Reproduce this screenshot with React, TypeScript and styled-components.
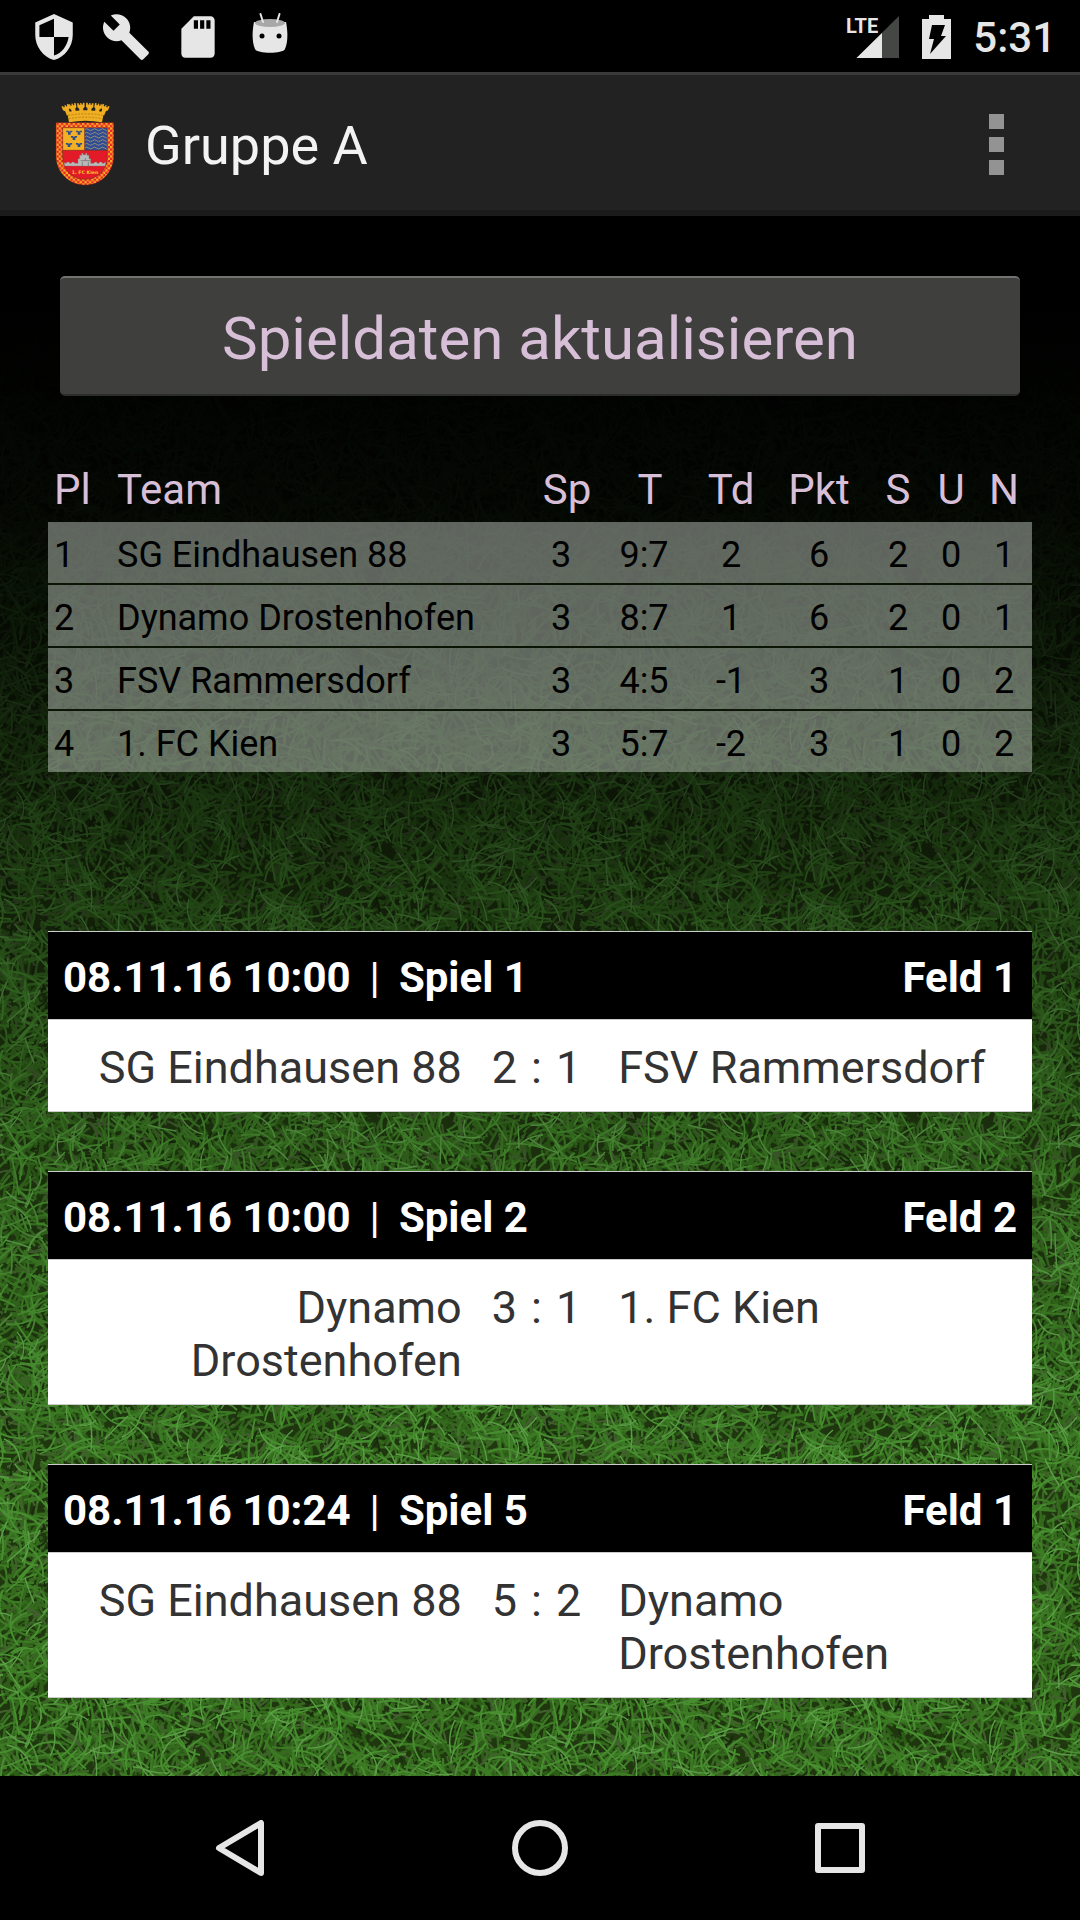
import React from 'react';
import styled, { createGlobalStyle } from 'styled-components';

const GlobalStyle = createGlobalStyle`
  *, *::before, *::after { box-sizing: border-box; }
  body {
    margin: 0;
    background: #000;
    font-family: Roboto, "Noto Sans", sans-serif;
  }
`;

const Screen = styled.div`
  display: flex;
  flex-direction: column;
  min-height: 100vh;
`;

/* ---------- status bar ---------- */

const StatusBar = styled.header`
  display: flex;
  justify-content: space-between;
  align-items: center;
  height: 72px;
  padding: 2px 24px 0 29px;
  background: #000;
`;

const StatusGroup = styled.div<{ $gap: number }>`
  display: flex;
  align-items: center;
  gap: ${(p) => p.$gap}px;
`;

const Clock = styled.time`
  color: #e6e6e6;
  font-size: 42px;
  font-weight: 500;
  line-height: 50px;
  padding-top: 2px;
`;

/* ---------- app bar ---------- */

const AppBar = styled.div`
  display: flex;
  align-items: center;
  height: 144px;
  padding: 3px 64px 0 54px;
  background: #222;
  border-top: 3px solid #3a3a3a;
  border-bottom: 6px solid #1b1b1b;
`;

const Title = styled.h1`
  flex: 1;
  margin: 0 0 0 29px;
  color: #f3f3f3;
  font-size: 54px;
  font-weight: 400;
  line-height: 64px;
  padding-top: 4px;
`;

const MenuButton = styled.button`
  display: flex;
  flex-direction: column;
  gap: 8px;
  padding: 12px;
  margin: 0;
  border: 0;
  background: none;
`;

const MenuDot = styled.span`
  width: 15px;
  height: 15px;
  background: #939393;
`;

/* ---------- content ---------- */

const Content = styled.main`
  position: relative;
  isolation: isolate;
  flex: 1;
  padding: 60px 48px;
`;

const GrassLayer = styled.svg`
  position: absolute;
  inset: 0;
  width: 100%;
  height: 100%;
  z-index: -1;
`;

const RefreshRow = styled.div`
  display: flex;
  padding: 0 12px;
`;

const RefreshButton = styled.button`
  flex: 1;
  height: 120px;
  padding: 6px 16px 0;
  border: 0;
  border-top: 2px solid #737371;
  border-bottom: 2px solid #2c2c2b;
  border-radius: 5px;
  background: #3f3f3d;
  color: #d8bfd8;
  font: 400 60px/70px Roboto, "Noto Sans", sans-serif;
`;

const Standings = styled.table`
  width: 100%;
  margin-top: 66px;
  table-layout: fixed;
  border-collapse: separate;
  border-spacing: 0;
`;

const Col = styled.col<{ $width?: number }>`
  width: ${(p) => (p.$width ? `${p.$width}px` : 'auto')};
`;

const HeadCell = styled.th<{ $align?: string; $shift?: boolean }>`
  height: 60px;
  padding: 3px ${(p) => (p.$align ? 4 : 0)}px 0 ${(p) => (p.$align ? 6 : p.$shift ? 12 : 0)}px;
  color: #d8bfd8;
  font-size: 42px;
  font-weight: 400;
  line-height: 49px;
  text-align: ${(p) => p.$align ?? 'center'};
  vertical-align: top;
  white-space: nowrap;
`;

const BodyRow = styled.tr`
  &:not(:last-child) > td {
    border-bottom: 2px solid #0b1405;
  }
`;

const Cell = styled.td<{ $align?: string }>`
  padding: 12px ${(p) => (p.$align ? 6 : 0)}px 7px;
  background: rgba(186, 194, 186, 0.5);
  background-clip: padding-box;
  color: #000;
  font-size: 36px;
  line-height: 42px;
  text-align: ${(p) => p.$align ?? 'center'};
  white-space: nowrap;
`;

const MatchList = styled.section`
  display: flex;
  flex-direction: column;
  gap: 59px;
  margin-top: 159px;
`;

const MatchCard = styled.article`
  border-top: 1px solid #ccc;
  border-bottom: 1px solid #ccc;
  background: #fff;
`;

const MatchHead = styled.header`
  display: flex;
  justify-content: space-between;
  padding: 21px 15px 17px;
  background: #000;
  color: #fff;
  font-size: 42px;
  font-weight: 700;
  line-height: 49px;
`;

const MatchInfo = styled.div`
  display: flex;
  gap: 19px;
`;

const Divider = styled.span`
  font-weight: 400;
`;

const MatchBody = styled.div`
  display: grid;
  grid-template-columns: 1fr auto 1fr;
  padding: 21px 16px 17px;
  border-top: 1px solid #ccc;
  color: #333;
  font-size: 45px;
  line-height: 53px;
`;

const TeamName = styled.span<{ $home?: boolean }>`
  text-align: ${(p) => (p.$home ? 'right' : 'left')};
`;

const Score = styled.span`
  display: flex;
  gap: 14px;
  padding: 0 37px 0 30px;
`;

/* ---------- navigation bar ---------- */

const NavBar = styled.nav`
  display: flex;
  height: 144px;
  padding: 0 90px;
  background: #000;
`;

const NavButton = styled.button`
  flex: 1;
  display: flex;
  align-items: center;
  justify-content: center;
  padding: 0;
  border: 0;
  background: none;
`;

/* ---------- drawings ---------- */

const TILE = 540;

function createRandom(seed: number) {
  let s = seed;
  return () => {
    s = (s * 1664525 + 1013904223) % 4294967296;
    return s / 4294967296;
  };
}

function blades(seed: number, count: number, min: number, max: number) {
  const rnd = createRandom(seed);
  const parts: string[] = [];
  for (let i = 0; i < count; i++) {
    const x = rnd() * TILE;
    const y = rnd() * TILE;
    const angle = rnd() * Math.PI * 2;
    const len = min + rnd() * (max - min);
    const bend = (rnd() - 0.5) * len * 0.7;
    const dx = Math.cos(angle) * len;
    const dy = Math.sin(angle) * len;
    const cx = dx / 2 - Math.sin(angle) * bend;
    const cy = dy / 2 + Math.cos(angle) * bend;
    const curve = `q${cx.toFixed(0)} ${cy.toFixed(0)} ${dx.toFixed(0)} ${dy.toFixed(0)}`;
    const xs = x + dx < 0 ? [0, TILE] : x + dx > TILE ? [0, -TILE] : [0];
    const ys = y + dy < 0 ? [0, TILE] : y + dy > TILE ? [0, -TILE] : [0];
    xs.forEach((ox) =>
      ys.forEach((oy) => parts.push(`M${(x + ox).toFixed(0)} ${(y + oy).toFixed(0)}${curve}`)),
    );
  }
  return parts.join('');
}

const GRASS = [
  { color: '#2c5d16', width: 3, d: blades(11, 2400, 10, 26) },
  { color: '#1e3a0e', width: 2, d: blades(23, 1000, 8, 22) },
  { color: '#356a1e', width: 2.4, d: blades(37, 2400, 14, 34) },
  { color: '#42602e', width: 2, d: blades(41, 900, 10, 26) },
  { color: '#182b0c', width: 2, d: blades(59, 600, 5, 14) },
  { color: '#3c7b24', width: 2.2, d: blades(67, 1500, 16, 38) },
  { color: '#488f30', width: 1.8, d: blades(83, 900, 18, 40) },
  { color: '#5a9f45', width: 1.4, d: blades(97, 320, 16, 36) },
];

function Grass() {
  return (
    <GrassLayer aria-hidden="true">
      <defs>
        <pattern id="grass" width={TILE} height={TILE} patternUnits="userSpaceOnUse">
          <rect width={TILE} height={TILE} fill="#1f360f" />
          {GRASS.map((layer) => (
            <path key={layer.color} d={layer.d} fill="none" stroke={layer.color} strokeWidth={layer.width} />
          ))}
        </pattern>
        <linearGradient id="dusk" x1="0" y1="0" x2="0" y2="1">
          <stop offset="0" stopColor="#000" />
          <stop offset="0.06" stopColor="#000" />
          <stop offset="0.19" stopColor="#000" stopOpacity="0.92" />
          <stop offset="0.28" stopColor="#000" stopOpacity="0.78" />
          <stop offset="0.36" stopColor="#000" stopOpacity="0.62" />
          <stop offset="0.46" stopColor="#000" stopOpacity="0.4" />
          <stop offset="0.6" stopColor="#000" stopOpacity="0.14" />
          <stop offset="0.8" stopColor="#000" stopOpacity="0" />
        </linearGradient>
      </defs>
      <rect width="100%" height="100%" fill="url(#grass)" />
      <rect width="100%" height="100%" fill="url(#dusk)" />
    </GrassLayer>
  );
}

const ICON = '#e6e6e6';

const ShieldIcon = () => (
  <svg width="50" height="50" viewBox="0 0 24 24" fill={ICON} aria-hidden="true">
    <path d="M12 1L3 5v6c0 5.55 3.84 10.74 9 12 5.16-1.26 9-6.45 9-12V5l-9-4zm0 10.99h7c-.53 4.12-3.28 7.79-7 8.94V12H5V6.3l7-3.11v8.8z" />
  </svg>
);

const WrenchIcon = () => (
  <svg width="50" height="50" viewBox="0 0 24 24" fill={ICON} aria-hidden="true">
    <path d="M22.7 19l-9.1-9.1c.9-2.3.4-5-1.5-6.9-2-2-5-2.4-7.4-1.3L9 6 6 9 1.6 4.7C.4 7.1.9 10.1 2.9 12.1c1.9 1.9 4.6 2.4 6.9 1.5l9.1 9.1c.4.4 1 .4 1.4 0l2.3-2.3c.5-.4.5-1.1.1-1.4z" />
  </svg>
);

const CardIcon = () => (
  <svg width="50" height="50" viewBox="0 0 24 24" fill={ICON} aria-hidden="true">
    <path d="M18 2h-8L4.02 8 4 20c0 1.1.9 2 2 2h12c1.1 0 2-.9 2-2V4c0-1.1-.9-2-2-2zm-6 6h-2V4h2v4zm3 0h-2V4h2v4zm3 0h-2V4h2v4z" />
  </svg>
);

const DroidIcon = () => (
  <svg width="50" height="50" viewBox="0 0 50 50" aria-hidden="true">
    <path d="M9 10C7 20 7 30 10 37c2 5 28 5 30 0 3-7 3-17 1-27z" fill={ICON} />
    <ellipse cx="25" cy="11" rx="15" ry="4" fill="#a8a8a8" />
    <path d="M15.500 2l2.500 8M34.500 2l-2.500 8" stroke={ICON} strokeWidth="2" strokeLinecap="round" />
    <circle cx="17" cy="24" r="2.500" />
    <circle cx="34" cy="24" r="2.500" />
  </svg>
);

const SignalIcon = () => (
  <svg width="54" height="50" viewBox="0 0 54 50" role="img" aria-label="LTE">
    <path d="M53 4v42H10.500z" fill="#454745" />
    <path d="M36 21v25H10.500z" fill={ICON} />
    <text x="0" y="21" fill={ICON} fontFamily="'Liberation Sans Narrow', Roboto, sans-serif" fontWeight="700" fontSize="20">
      LTE
    </text>
  </svg>
);

const BatteryIcon = () => (
  <svg width="29" height="50" viewBox="0 0 29 50" aria-hidden="true">
    <path d="M7 3h15v4h7v40H0V7h7z" fill={ICON} />
    <path d="M10 13h13l-4 11h5L8 42l4-15H7z" fill="#000" />
  </svg>
);

const LILIES = [[88, 128], [117, 128], [102, 144], [87, 165], [117, 165]];

const MERLONS = [[78, 54, -22], [98, 50, -12], [123, 48, -4], [149, 48, 4], [174, 50, 12], [195, 54, 22]];

const Crest = () => (
  <svg width="62" height="84" viewBox="42 36 186 252" role="img" aria-label="Wappen 1. FC Kien">
    <defs>
      <pattern id="check" width="14" height="14" patternUnits="userSpaceOnUse">
        <rect width="14" height="14" fill="#e8202a" />
        <path d="M0 0h7v7H0zM7 7h7v7H7z" fill="#f4b024" />
      </pattern>
      <clipPath id="field">
        <path d="M68 113h134v87c0 40-30 68-67 68s-67-28-67-68z" />
      </clipPath>
    </defs>
    <path d="M87 97L81 66q55-10 111 0l-6 31q-50-9-99 0z" fill="#f0ae22" />
    {MERLONS.map(([x, y, turn]) => (
      <path
        key={x}
        d="M-11 -9h5v5h4v-5h4v5h4v-5h5v12l-5 5v14h-12v-14l-5-5z"
        transform={`translate(${x} ${y}) rotate(${turn})`}
        fill="#f0ae22"
      />
    ))}
    <path d="M84 76q52-9 105 0M86 86q50-9 100 0" fill="none" stroke="#b98818" strokeWidth="3" strokeDasharray="6 4" />
    <path d="M48 98h173v98c0 52-38 89-86 89s-87-37-87-89z" fill="url(#check)" stroke="#a51a1c" strokeWidth="1" />
    <g clipPath="url(#field)">
      <rect x="66" y="110" width="140" height="72" fill="#f4b024" />
      <rect x="134" y="110" width="72" height="72" fill="#2f4c99" />
      {[119, 130, 141, 152, 163, 174].map((y) => (
        <path key={y} d={`M134 ${y}q6-6 12 0t12 0 12 0 12 0 12 0 12 0`} fill="none" stroke="#9c8f62" strokeWidth="3" />
      ))}
      {LILIES.map(([x, y]) => (
        <path
          key={`${x}-${y}`}
          d={`M${x - 10} ${y - 6}h7l3 3 3-3h7l-2 5h-4v7h-8v-7h-4z`}
          fill="#2f4c8f"
        />
      ))}
      <rect x="66" y="181" width="140" height="90" fill="#e31b28" />
      <path
        d="M66 218l5-3 3 5h5l2-4h6l2 4h5l2-4h6l2 4h10v-14h5v-10h6v-6h4v4h8v-4h4v6h6v10h5v14h10l2-4h6l2 4h5l2-4h6l2 4h5l5-5v13H66z"
        fill="#b9b9b9"
        stroke="#777"
        strokeWidth="1"
      />
      <path d="M127 216v14M136 204v8M145 216v14M122 212h28" stroke="#666" strokeWidth="2" />
    </g>
    <path d="M68 113h134v87c0 40-30 68-67 68s-67-28-67-68zM68 181h134M134 113v68" fill="none" stroke="#7b2b1c" strokeWidth="2" />
    <text x="135" y="252" textAnchor="middle" fill="#f6c52a" fontFamily="'DejaVu Sans', sans-serif" fontWeight="700" fontSize="14">
      1. FC Kien
    </text>
  </svg>
);

/* ---------- data ---------- */

const COLUMNS: { label: string; width?: number; align?: string; shift?: boolean }[] = [
  { label: 'Pl', width: 63, align: 'left' },
  { label: 'Team', align: 'left' },
  { label: 'Sp', width: 66, shift: true },
  { label: 'T', width: 100, shift: true },
  { label: 'Td', width: 74 },
  { label: 'Pkt', width: 102 },
  { label: 'S', width: 56 },
  { label: 'U', width: 50 },
  { label: 'N', width: 56 },
];

const ROWS = [
  ['1', 'SG Eindhausen 88', '3', '9:7', '2', '6', '2', '0', '1'],
  ['2', 'Dynamo Drostenhofen', '3', '8:7', '1', '6', '2', '0', '1'],
  ['3', 'FSV Rammersdorf', '3', '4:5', '-1', '3', '1', '0', '2'],
  ['4', '1. FC Kien', '3', '5:7', '-2', '3', '1', '0', '2'],
];

const MATCHES = [
  { date: '08.11.16 10:00', game: 'Spiel 1', field: 'Feld 1', home: 'SG Eindhausen 88', away: 'FSV Rammersdorf', score: [2, 1] },
  { date: '08.11.16 10:00', game: 'Spiel 2', field: 'Feld 2', home: 'Dynamo Drostenhofen', away: '1. FC Kien', score: [3, 1] },
  { date: '08.11.16 10:24', game: 'Spiel 5', field: 'Feld 1', home: 'SG Eindhausen 88', away: 'Dynamo Drostenhofen', score: [5, 2] },
];

export default function App() {
  return (
    <Screen>
      <GlobalStyle />
      <StatusBar>
        <StatusGroup $gap={22}>
          <ShieldIcon />
          <WrenchIcon />
          <CardIcon />
          <DroidIcon />
        </StatusGroup>
        <StatusGroup $gap={22}>
          <SignalIcon />
          <BatteryIcon />
          <Clock>5:31</Clock>
        </StatusGroup>
      </StatusBar>

      <AppBar>
        <Crest />
        <Title>Gruppe A</Title>
        <MenuButton aria-label="Menü">
          <MenuDot />
          <MenuDot />
          <MenuDot />
        </MenuButton>
      </AppBar>

      <Content>
        <Grass />
        <RefreshRow>
          <RefreshButton>Spieldaten aktualisieren</RefreshButton>
        </RefreshRow>

        <Standings>
          <colgroup>
            {COLUMNS.map((c) => (
              <Col key={c.label} $width={c.width} />
            ))}
          </colgroup>
          <thead>
            <tr>
              {COLUMNS.map((c) => (
                <HeadCell key={c.label} scope="col" $align={c.align} $shift={c.shift}>
                  {c.label}
                </HeadCell>
              ))}
            </tr>
          </thead>
          <tbody>
            {ROWS.map((row) => (
              <BodyRow key={row[0]}>
                {row.map((value, i) => (
                  <Cell key={COLUMNS[i].label} $align={COLUMNS[i].align}>
                    {value}
                  </Cell>
                ))}
              </BodyRow>
            ))}
          </tbody>
        </Standings>

        <MatchList>
          {MATCHES.map((m) => (
            <MatchCard key={m.game}>
              <MatchHead>
                <MatchInfo>
                  <span>{m.date}</span>
                  <Divider>|</Divider>
                  <span>{m.game}</span>
                </MatchInfo>
                <span>{m.field}</span>
              </MatchHead>
              <MatchBody>
                <TeamName $home>{m.home}</TeamName>
                <Score>
                  <span>{m.score[0]}</span>
                  <span>:</span>
                  <span>{m.score[1]}</span>
                </Score>
                <TeamName>{m.away}</TeamName>
              </MatchBody>
            </MatchCard>
          ))}
        </MatchList>
      </Content>

      <NavBar>
        <NavButton aria-label="Zurück">
          <svg width="56" height="56" viewBox="0 0 56 56" fill="none" stroke={ICON} strokeWidth="6" strokeLinejoin="round">
            <path d="M49 3v50L7 28z" />
          </svg>
        </NavButton>
        <NavButton aria-label="Startseite">
          <svg width="56" height="56" viewBox="0 0 56 56" fill="none" stroke={ICON} strokeWidth="6">
            <circle cx="28" cy="28" r="25" />
          </svg>
        </NavButton>
        <NavButton aria-label="Übersicht">
          <svg width="56" height="56" viewBox="0 0 56 56" fill="none" stroke={ICON} strokeWidth="6" strokeLinejoin="round">
            <rect x="6" y="6" width="44" height="44" />
          </svg>
        </NavButton>
      </NavBar>
    </Screen>
  );
}
